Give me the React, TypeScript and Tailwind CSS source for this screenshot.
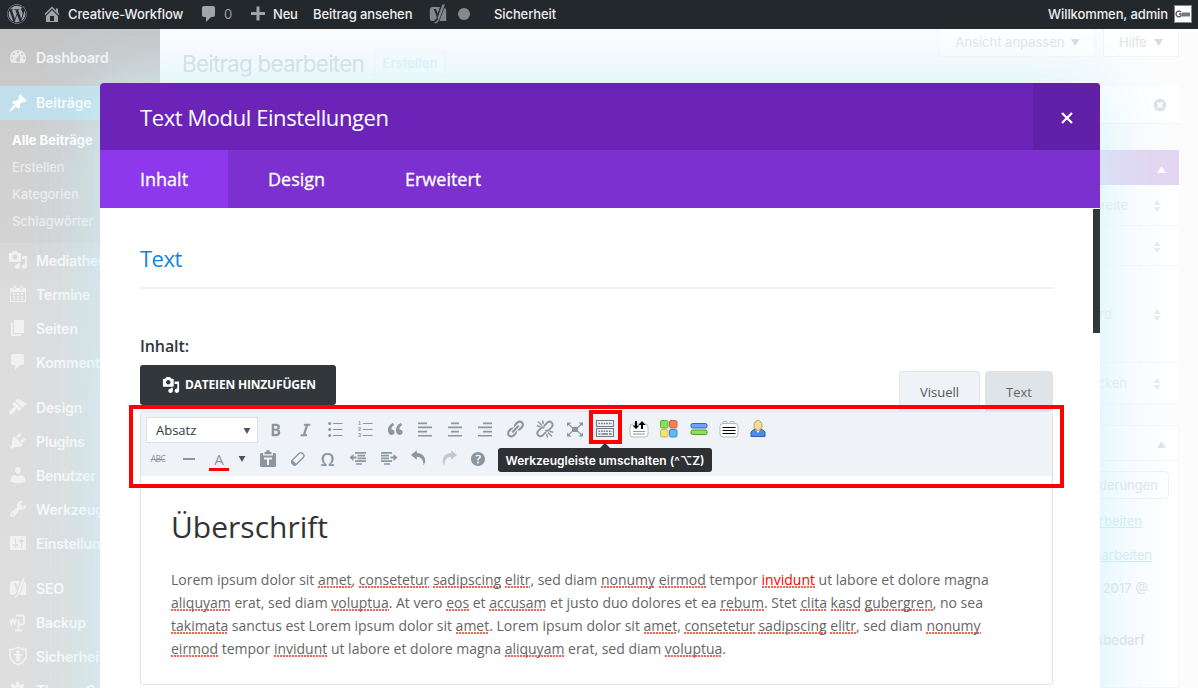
import React from "react";
import { FaWordpress } from "react-icons/fa";

const P = {
  dashboard:
    "M3.76 16h12.48c1.1-1.37 1.76-3.11 1.76-5 0-4.42-3.58-8-8-8s-8 3.58-8 8c0 1.89.66 3.63 1.76 5zM10 4c.55 0 1 .45 1 1s-.45 1-1 1-1-.45-1-1 .45-1 1-1zM6 6c.55 0 1 .45 1 1s-.45 1-1 1-1-.45-1-1 .45-1 1-1zm8 0c.55 0 1 .45 1 1s-.45 1-1 1-1-.45-1-1 .45-1 1-1zm-5.37 5.55L12 7v6c0 1.1-.9 2-2 2s-2-.9-2-2c0-.57.24-1.08.63-1.45zM4 10c.55 0 1 .45 1 1s-.45 1-1 1-1-.45-1-1 .45-1 1-1zm12 0c.55 0 1 .45 1 1s-.45 1-1 1-1-.45-1-1 .45-1 1-1z",
  pin: "M10.44 3.02l1.82-1.82 6.36 6.35-1.83 1.82c-1.05-.68-2.48-.57-3.41.36l-.75.75c-.92.93-1.04 2.35-.35 3.41l-1.83 1.82-2.41-2.41-2.8 2.79c-.42.42-3.38 2.71-3.8 2.29s1.86-3.39 2.28-3.81l2.79-2.79L4.1 9.36l1.83-1.82c1.05.69 2.48.57 3.4-.36l.75-.75c.93-.92 1.05-2.35.36-3.41z",
  media:
    "M13 11V4c0-.55-.45-1-1-1h-1.67L9 1H5L3.67 3H2c-.55 0-1 .45-1 1v7c0 .55.45 1 1 1h10c.55 0 1-.45 1-1zM7 4.5c1.38 0 2.5 1.12 2.5 2.5S8.38 9.5 7 9.5 4.5 8.38 4.5 7 5.62 4.5 7 4.5zM14 6h5v10.5c0 1.38-1.12 2.5-2.5 2.5S14 17.88 14 16.5s1.12-2.5 2.5-2.5c.17 0 .34.02.5.05V9h-3V6zm-4 8.05V13h2v3.5c0 1.38-1.12 2.5-2.5 2.5S7 17.88 7 16.5 8.12 14 9.5 14c.17 0 .34.02.5.05z",
  calendar:
    "M15 4h3v14H2V4h3V3c0-.83.67-1.5 1.5-1.5S8 2.17 8 3v1h4V3c0-.83.67-1.5 1.5-1.5S15 2.17 15 3v1zM6 3v2.5c0 .28.22.5.5.5s.5-.22.5-.5V3c0-.28-.22-.5-.5-.5S6 2.72 6 3zm7 0v2.5c0 .28.22.5.5.5s.5-.22.5-.5V3c0-.28-.22-.5-.5-.5s-.5.22-.5.5zm4 14V8H3v9h14zM7 9v2H5V9zM11 9v2H9V9zM15 9v2h-2V9zM7 12v1.500H5V12zM11 12v1.500H9V12zM15 12v1.500h-2V12zM7 14.500v1.500H5v-1.500zM11 14.500v1.500H9v-1.500zM15 14.500v1.500h-2v-1.500z",
  page: "M6 15V2h10v13H6zm-1 1h8v2H3V5h2v11z",
  comment:
    "M5 2h9c1.1 0 2 .9 2 2v7c0 1.1-.9 2-2 2h-2l-5 5v-5H5c-1.1 0-2-.9-2-2V4c0-1.1.9-2 2-2z",
  brush:
    "M14.48 11.06L7.41 3.99l1.5-1.5c.5-.56 2.3-.47 3.51.32 1.21.8 1.43 1.28 2.91 2.1 1.18.64 2.45 1.26 4.45.85zm-.71.71L6.7 4.7 4.93 6.47c-.39.39-.39 1.02 0 1.41l1.06 1.06c.39.39.39 1.03 0 1.42-.6.6-1.43 1.11-2.21 1.69-.35.26-.7.53-1.01.84C1.43 14.23.4 16.08 1.4 17.07c.99 1 2.84-.03 4.18-1.36.31-.31.58-.66.85-1.02.57-.78 1.08-1.61 1.69-2.21.39-.39 1.02-.39 1.41 0l1.06 1.06c.39.39 1.02.39 1.41 0z",
  plug: "M13.11 4.36L9.87 7.6 8 5.73l3.24-3.24c.35-.34 1.05-.2 1.56.32.52.51.66 1.21.31 1.55zm-8 1.77l.91-1.12 9.01 9.01-1.19.84c-.71.71-2.63 1.16-3.82 1.16H6.14L4.9 17.26c-.59.59-1.54.59-2.12 0-.59-.58-.59-1.53 0-2.12l1.24-1.24v-3.88c0-1.13.4-3.19 1.09-3.89zm7.26 3.97l3.24-3.24c.34-.35 1.04-.21 1.55.31.52.51.66 1.21.31 1.55l-3.24 3.25z",
  user: "M10 9.25c-2.27 0-2.73-3.44-2.73-3.44C7 4.02 7.82 2 9.97 2c2.16 0 2.98 2.02 2.71 3.81 0 0-.41 3.44-2.68 3.44zm0 2.57L12.72 10c2.39 0 4.52 2.33 4.52 4.53v2.49s-3.65 1.13-7.24 1.13c-3.65 0-7.24-1.13-7.24-1.13v-2.49c0-2.25 1.94-4.48 4.47-4.48z",
  wrench:
    "M16.68 9.77c-1.34 1.34-3.3 1.67-4.95.99l-5.41 6.52c-.99.99-2.59.99-3.58 0s-.99-2.59 0-3.57l6.52-5.42c-.68-1.65-.35-3.61.99-4.95 1.28-1.28 3.12-1.62 4.72-1.06l-2.89 2.89 2.82 2.82 2.86-2.87c.53 1.58.18 3.39-1.08 4.65zM3.81 16.21c.4.39 1.04.39 1.43 0 .4-.4.4-1.04 0-1.43-.39-.4-1.03-.4-1.43 0-.39.39-.39 1.03 0 1.43z",
  sliders:
    "M18 16V4c0-.55-.45-1-1-1H3c-.55 0-1 .45-1 1v12c0 .55.45 1 1 1h14c.55 0 1-.45 1-1zM8 11h1c.55 0 1 .45 1 1s-.45 1-1 1H8v1.5c0 .28-.22.5-.5.5s-.5-.22-.5-.5V13H6c-.55 0-1-.45-1-1s.45-1 1-1h1V5.5c0-.28.22-.5.5-.5s.5.22.5.5V11zm5-2h-1c-.55 0-1-.45-1-1s.45-1 1-1h1V5.5c0-.28.22-.5.5-.5s.5.22.5.5V7h1c.55 0 1 .45 1 1s-.45 1-1 1h-1v5.5c0 .28-.22.5-.5.5s-.5-.22-.5-.5V9z",
  home: "M16 8.5l1.53 1.53-1.06 1.06L10 4.6l-6.47 6.49-1.06-1.06L10 2.5l4 4v-2h2v4zm-6-2.46l6 5.99V18H4v-5.97zM12 17v-5H8v5h4z",
  plus: "M17 8v3h-5.500v5.500h-3V11H3V8h5.500V2.500h3V8z",
  gear: "M18 12h-2.180c-.170.700-.440 1.350-.810 1.930l1.540 1.540-2.100 2.100-1.540-1.540c-.580.360-1.230.630-1.910.790V19H8v-2.180c-.680-.160-1.330-.430-1.910-.790l-1.540 1.540-2.120-2.120 1.540-1.540c-.360-.580-.630-1.230-.790-1.910H1V9h2.170c.160-.700.440-1.350.800-1.940L2.430 5.520l2.100-2.100 1.540 1.540c.580-.370 1.240-.640 1.930-.810V2h3v2.180c.680.160 1.330.430 1.910.790l1.540-1.540 2.120 2.120-1.540 1.540c.360.590.640 1.240.800 1.940H18zM9.500 13.500c1.660 0 3-1.340 3-3s-1.340-3-3-3-3 1.340-3 3 1.340 3 3 3z",
  bold: "M6 4v13h4.54c1.37 0 2.46-.33 3.26-1 .8-.66 1.2-1.58 1.2-2.77 0-.84-.17-1.51-.51-2.01s-.9-.85-1.67-1.03v-.09c.57-.1 1.02-.4 1.36-.9s.51-1.13.51-1.91c0-1.14-.39-1.98-1.17-2.5C12.75 4.26 11.5 4 9.78 4H6zm2.57 5.15V6.26h1.36c.73 0 1.27.11 1.61.32.34.22.51.58.51 1.07 0 .54-.16.92-.47 1.15s-.82.35-1.51.35h-1.5zm0 2.19h1.6c1.44 0 2.16.53 2.16 1.61 0 .6-.17 1.05-.51 1.34s-.86.43-1.57.43H8.57v-3.38z",
  italic: "M14.78 6h-2.13l-2.8 9h2.12l-.62 2H4.6l.62-2h2.14l2.8-9H8.03l.62-2h6.75z",
  quote:
    "M9.49 13.22c0-.74-.2-1.38-.61-1.9-.62-.78-1.83-.88-2.53-.72-.29-1.65 1.11-3.75 2.92-4.65L7.88 4c-2.73 1.3-5.42 4.28-4.96 8.05C3.21 14.43 4.59 16 6.54 16c.85 0 1.56-.25 2.12-.75s.83-1.18.83-2.03zm8.05 0c0-.74-.2-1.38-.61-1.9-.63-.78-1.83-.88-2.53-.72-.29-1.65 1.11-3.75 2.92-4.65L15.93 4c-2.73 1.3-5.41 4.28-4.95 8.05.29 2.38 1.66 3.95 3.61 3.95.85 0 1.56-.25 2.12-.75s.83-1.18.83-2.03z",
  link: "M17.74 2.76c1.68 1.69 1.68 4.41 0 6.1l-1.53 1.52c-1.12 1.12-2.7 1.47-4.14 1.09l2.62-2.61.76-.77.76-.76c.84-.84.84-2.2 0-3.04-.84-.85-2.2-.85-3.04 0l-.77.76-3.38 3.38c-.37-1.44-.02-3.02 1.1-4.14l1.52-1.53c1.69-1.68 4.42-1.68 6.1 0zM8.59 13.43l5.34-5.34c.42-.42.42-1.1 0-1.52-.44-.43-1.13-.39-1.53 0l-5.33 5.34c-.42.42-.42 1.1 0 1.52.44.43 1.13.39 1.52 0zm-.76 2.29l4.14-4.15c.38 1.44.03 3.02-1.09 4.14l-1.52 1.53c-1.69 1.68-4.41 1.68-6.1 0-1.68-1.68-1.68-4.42 0-6.1l1.53-1.52c1.12-1.12 2.7-1.47 4.14-1.1l-4.14 4.15c-.85.84-.85 2.2 0 3.05.84.84 2.2.84 3.04 0z",
  left: "M12 5.200V3.500H3v1.700h9zm5 4V7.500H3v1.700h14zm-5 4.200v-1.700H3v1.700h9zm5 4.200v-1.700H3v1.700h14z",
  center: "M14 5.200V3.500H6v1.700h8zm3 4V7.500H3v1.700h14zm-3 4.200v-1.700H6v1.700h8zm3 4.200v-1.700H3v1.700h14z",
  right: "M17 5.200V3.500H8v1.700h9zm0 4V7.500H3v1.700h14zm0 4.200v-1.700H8v1.700h9zm0 4.200v-1.700H3v1.700h14z",
  help: "M17 10c0-3.87-3.14-7-7-7-3.87 0-7 3.13-7 7s3.13 7 7 7c3.86 0 7-3.13 7-7zm-6.3 1.48H9.14v-.43c0-.38.08-.7.24-.98s.46-.57.88-.89c.41-.29.68-.53.81-.71.14-.18.2-.39.2-.62 0-.25-.09-.44-.28-.58-.19-.13-.45-.19-.79-.19-.58 0-1.25.19-2 .57l-.64-1.28c.87-.49 1.8-.74 2.77-.74.81 0 1.45.2 1.92.58.48.39.71.91.71 1.55 0 .43-.09.8-.29 1.11-.19.32-.57.67-1.11 1.06-.38.28-.61.49-.71.63-.1.15-.15.34-.15.57v.35zm-1.47 2.74c-.18-.17-.27-.42-.27-.73 0-.33.08-.58.26-.75s.43-.25.77-.25c.32 0 .57.09.75.26s.27.42.27.74c0 .3-.09.55-.27.72-.18.18-.43.27-.75.27-.33 0-.58-.09-.76-.26z",
  yoast:
    "M4.500 3H12l-2.300 6.400L7.900 5H5.700l2.900 7.300c.3.700.3 1.200 0 1.900-.3.800-.8 1.300-2 1.500V17H4.500C3 17 1.800 15.900 1.800 14.400V5.600C1.800 4.100 3 3 4.500 3zM14.400.500h2.500L11 16c-.9 2.300-1.900 3.500-4.300 3.500v-1.600c1.700-.1 2.500-1 3-2.400.3-.8.300-1.600 0-2.400l.1-.2zM16.300 4c1.100.3 1.900 1.200 1.900 2.400V17H11.400z",
};

function Icon({ d, className = "size-5" }: { d: string; className?: string }) {
  return (
    <svg viewBox="0 0 20 20" className={className} fill="currentColor" fillRule="evenodd">
      <path d={d} />
    </svg>
  );
}

function Svg({ children, className = "size-5" }: { children: React.ReactNode; className?: string }) {
  return (
    <svg viewBox="0 0 20 20" className={className} fill="none" stroke="currentColor">
      {children}
    </svg>
  );
}

function AdminBar() {
  return (
    <header className="flex h-[29px] items-center bg-[#23282d] text-[13px] font-medium text-[#eee]">
      <FaWordpress className="mb-px ml-[7px] size-5 text-[#9ca1a6]" />
      <Icon d={P.home} className="mb-px ml-[15px] size-5 text-[#a0a5aa]" />
      <span className="ml-[6px] w-[116px] whitespace-nowrap tracking-[-0.1px]">Creative-Workflow</span>
      <Icon d={P.comment} className="mb-px ml-[15px] size-5 text-[#a0a5aa]" />
      <span className="ml-[5px] w-[9px] font-normal text-[#9ca1a6]">0</span>
      <Icon d={P.plus} className="mb-px ml-[15px] size-5 text-[#a0a5aa]" />
      <span className="ml-[5px] w-[25px] tracking-[-0.2px]">Neu</span>
      <span className="ml-[15px] w-[100px] whitespace-nowrap tracking-[-0.1px]">Beitrag ansehen</span>
      <Icon d={P.yoast} className="mb-px ml-[15px] size-5 text-[#82878c]" />
      <span className="mb-px ml-[10px] size-3 rounded-full bg-[#888]" />
      <span className="ml-[24px] tracking-[-0.1px]">Sicherheit</span>
      <span className="mr-[6px] ml-auto tracking-[-0.1px]">Willkommen, admin</span>
      <span className="mr-[6px] mb-px flex h-[18px] w-[18px] items-center justify-center border border-[#82878c] bg-white">
        <svg viewBox="0 0 16 16" className="size-4" fill="none" stroke="#555">
          <path d="M6 6C4 4 1 5.500 1 8s3 4 5 2V8H4" strokeWidth="1.300" />
          <path d="M7 8.500h8" strokeWidth="4" stroke="#777" />
        </svg>
      </span>
    </header>
  );
}

function BackupIcon() {
  return (
    <Svg>
      <path d="M2 6.500l1.500 5 1.600-4 1.600 4 1.500-5" strokeWidth="1.800" />
      <path d="M8 3.500h6.500a1.500 1.500 0 0 1 1.500 1.500v6a1.500 1.500 0 0 1-1.500 1.500h-4V7M10.500 12v6M7 18.500h7" strokeWidth="1.800" />
    </Svg>
  );
}

function ShieldIcon() {
  return (
    <Svg>
      <path d="M2 3.200l2.500.3L10 1.500l5.500 2 2.500-.3v6.800c0 4-4 7-8 8.800-4-1.800-8-4.800-8-8.800z" strokeWidth="1.700" />
      <circle cx="10" cy="6" r="1.800" fill="currentColor" stroke="none" />
      <path d="M5.500 8.800h9M10 8.500v6.500M8.700 9v6M11.300 9v6" strokeWidth="1.700" />
    </Svg>
  );
}

function SideItem({ icon, label }: { icon: React.ReactNode; label: string }) {
  return (
    <div className="flex h-[34px] shrink-0 items-center gap-2 pl-2 text-white/60">
      {icon}
      <span className="text-[14px] font-semibold tracking-[-0.15px] whitespace-nowrap text-white/80">{label}</span>
    </div>
  );
}

function Sidebar() {
  return (
    <nav className="flex w-40 shrink-0 flex-col overflow-hidden bg-linear-to-b from-[#c5c5c6] via-[#dcdcdd] via-40% to-[#dededf] pt-3">
      <div className="-mt-px flex shrink-0 flex-col">
        <SideItem icon={<Icon d={P.dashboard} />} label="Dashboard" />
      </div>
      <div className="mt-[12px] flex h-[34px] shrink-0 items-center gap-2 bg-[#c0deeb] pb-px pl-2 text-white">
        <Icon d={P.pin} />
        <span className="text-[14px] font-semibold tracking-[-0.15px] text-white/90">Beiträge</span>
      </div>
      <div className="flex h-[123px] shrink-0 flex-col bg-[#cfcfd0]/50 pt-[7px] pl-3 text-[13px] font-medium tracking-[-0.15px] text-white/60">
        <span className="h-[27px] leading-[27px] font-bold tracking-normal text-white">Alle Beiträge</span>
        <span className="h-[27px] leading-[27px]">Erstellen</span>
        <span className="h-[27px] leading-[27px]">Kategorien</span>
        <span className="h-[27px] leading-[27px]">Schlagwörter</span>
      </div>
      <SideItem icon={<Icon d={P.media} />} label="Mediathek" />
      <SideItem icon={<Icon d={P.calendar} />} label="Termine" />
      <SideItem icon={<Icon d={P.page} />} label="Seiten" />
      <SideItem icon={<Icon d={P.comment} />} label="Kommentare" />
      <div className="h-[11px] shrink-0" />
      <SideItem icon={<Icon d={P.brush} />} label="Design" />
      <SideItem icon={<Icon d={P.plug} />} label="Plugins" />
      <SideItem icon={<Icon d={P.user} />} label="Benutzer" />
      <SideItem icon={<Icon d={P.wrench} />} label="Werkzeuge" />
      <SideItem icon={<Icon d={P.sliders} />} label="Einstellungen" />
      <div className="h-[11px] shrink-0" />
      <SideItem icon={<Icon d={P.yoast} />} label="SEO" />
      <SideItem icon={<BackupIcon />} label="Backup" />
      <SideItem icon={<ShieldIcon />} label="Sicherheit" />
      <SideItem icon={<Icon d={P.gear} />} label="Theme Options" />
    </nav>
  );
}

function Sorter() {
  return (
    <svg viewBox="0 0 8 14" className="mr-[18px] h-[14px] w-2" fill="#eaedee">
      <path d="M4 1l3.500 5h-7zM4 13l3.500-5h-7z" />
    </svg>
  );
}

function OptionRow({ label, className }: { label: string; className: string }) {
  return (
    <div className={`flex shrink-0 items-center border-b border-[#f8f9fa] pt-[2px] ${className}`}>
      <span className="ml-auto text-right text-[13px] whitespace-nowrap">{label}</span>
      <Sorter />
    </div>
  );
}

function Main() {
  return (
    <main className="flex min-w-0 flex-1 flex-col bg-[#fcfcfd] pr-[19px] pl-[22px] text-[#e1e4e6]">
      <div className="flex h-[57px] shrink-0 justify-between">
        <div className="flex items-center gap-[10px] pt-[12px]">
          <h1 className="w-[182px] text-[22.5px] tracking-[-0.8px] whitespace-nowrap text-[#d5dadd]">Beitrag bearbeiten</h1>
          <span className="flex h-[25px] w-[72px] items-center justify-center border border-[#f4f8fa] text-[13px] font-semibold text-[#e1f1f7]">
            Erstellen
          </span>
        </div>
        <div className="flex gap-2 text-[13px]">
          <div className="flex h-[28px] w-[156px] items-center justify-center gap-[6px] border border-t-0 border-[#f7f8f8] bg-white pl-px">
            <span>Ansicht anpassen</span>
            <span className="text-[9px] text-[#d8dbdd]">▼</span>
          </div>
          <div className="flex h-[28px] w-[76px] items-center justify-center gap-[7px] border border-t-0 border-[#f4f5f6] bg-white">
            <span>Hilfe</span>
            <span className="text-[9px] text-[#d8dbdd]">▼</span>
          </div>
        </div>
      </div>
      <div className="flex h-[38px] w-[280px] shrink-0 items-center justify-end self-end border-b border-[#f3f4f5] bg-white pr-3">
        <svg viewBox="0 0 14 14" className="size-[14px]">
          <circle cx="7" cy="7" r="6.300" fill="#dfe1e3" />
          <path d="M4.500 4.500l5 5M9.500 4.500l-5 5" stroke="#fff" strokeWidth="1.800" />
        </svg>
      </div>
      <section className="mt-[26px] flex h-[254px] w-[280px] shrink-0 flex-col self-end border-b border-[#f6f7f8] bg-white/80 text-[#e9ecee]">
        <div className="flex h-[35px] shrink-0 items-center justify-end bg-[#e3d5f2] pt-[3px] pr-[13px]">
          <svg viewBox="0 0 10 8" className="h-[7px] w-[9px]" fill="#fff">
            <path d="M5 0l5 8H0z" />
          </svg>
        </div>
        <OptionRow label="Volle Breite" className="h-[41px] gap-[25px]" />
        <OptionRow label="" className="h-[40px]" />
        <OptionRow label="Standard" className="h-[97px] gap-[41px]" />
        <OptionRow label="Verstecken" className="h-[41px] gap-[26px]" />
      </section>
      <section className="mt-[21px] flex w-[280px] flex-1 flex-col self-end border border-[#f6f7f8] bg-white/80 text-right text-[13px]">
        <div className="flex h-[35px] shrink-0 items-center justify-end border-b border-[#f5f6f7] pt-[3px] pr-[12px]">
          <svg viewBox="0 0 10 8" className="h-[7px] w-[9px]" fill="#e2e5e7">
            <path d="M5 0l5 8H0z" />
          </svg>
        </div>
        <div className="mt-[10px] mr-[9px] flex h-[28px] w-[170px] shrink-0 items-center justify-end self-end rounded-sm border border-[#f1f3f4] pt-px pr-[10px]">
          Änderungen
        </div>
        <span className="mt-[14px] mr-[36px] h-[17px] leading-[17px] text-[#d3eaf2] underline">Bearbeiten</span>
        <span className="mt-[17px] mr-[26px] h-[17px] leading-[17px] text-[#d3eaf2] underline">Bearbeiten</span>
        <span className="mt-[16px] mr-[30px] h-[17px] leading-[17px] font-medium">Juni 2017 @</span>
        <span className="mt-[35px] mr-[33px] h-[17px] leading-[17px] font-semibold">Arbeitsbedarf</span>
      </section>
    </main>
  );
}

function Cell({ children, className = "w-[30px]" }: { children: React.ReactNode; className?: string }) {
  return <span className={`flex h-7 shrink-0 items-center justify-center ${className}`}>{children}</span>;
}

function ListIcon({ ordered = false }: { ordered?: boolean }) {
  return (
    <Svg>
      <path d="M8 4.500h9.500M8 10.500h9.500M8 16.500h9.500" strokeWidth="1.200" />
      {ordered ? (
        <g fill="currentColor" stroke="none" fontSize="5.500" fontFamily="Liberation Sans" fontWeight="700">
          <text x="3" y="6.300">1</text>
          <text x="3" y="12.300">2</text>
          <text x="3" y="18.300">3</text>
        </g>
      ) : (
        <g fill="currentColor" stroke="none">
          <circle cx="4.700" cy="4.500" r="1.500" />
          <circle cx="4.700" cy="10.500" r="1.500" />
          <circle cx="4.700" cy="16.500" r="1.500" />
        </g>
      )}
    </Svg>
  );
}

function UnlinkIcon() {
  return (
    <Svg>
      <g strokeWidth="1.900">
        <path d="M9 7l3.300-3.300a3.100 3.100 0 0 1 4.400 4.400L14 10.800c-1 1-2.500 1-3.500.3" />
        <path d="M11 13l-3.300 3.300a3.100 3.100 0 0 1-4.400-4.400L6 9.200c1-1 2.500-1 3.500-.3" />
      </g>
      <path d="M7 6.500L3 2.500M8.300 5L7.500 1.500M5.500 7.700L1.800 6.700M13 13.500l4 4M11.700 15l.8 3.500M14.500 12.300l3.700 1" strokeWidth="1.500" />
    </Svg>
  );
}

function FullscreenIcon() {
  return (
    <Svg>
      <g fill="currentColor" stroke="none">
        <path d="M7 8h6v5H7zM2 3.500h4.500L2 7.500zM18 3.500h-4.500L18 7.500zM2 17.500h4.500L2 13.500zM18 17.500h-4.500L18 13.500z" />
      </g>
      <path d="M3 4.500l4 4M17 4.500l-4 4M3 16.500l4-4M17 16.500l-4-4" strokeWidth="1.100" />
    </Svg>
  );
}

function KitchenSinkIcon() {
  return (
    <Svg className="mb-[2px] size-5 text-[#6f7a84]">
      <path d="M1.500 2.500h17v6h-17zM1.500 10.500h17v8h-17z" strokeWidth="1.100" />
      <path d="M3.500 5.500h13.400" strokeWidth="1.600" strokeDasharray="1.600 1" />
      <path d="M3.500 13.200h13.400" strokeWidth="1.500" strokeDasharray="1.600 1" />
      <path d="M3.500 16h2M6.500 16h6.500M14 16h2.700" strokeWidth="1.500" />
    </Svg>
  );
}

function OutdentIcon({ indent = false }: { indent?: boolean }) {
  return (
    <Svg>
      {indent ? (
        <>
          <path d="M2 3.800h11M2 6.600h8M2 9.400h8M2 12.200h11M5 15h6" strokeWidth="1.700" />
          <path d="M11.500 8.500h4" strokeWidth="2" />
          <path d="M14.500 5l4 3.500-4 3.500z" fill="currentColor" stroke="none" />
        </>
      ) : (
        <>
          <path d="M7 3.800h11M9.500 6.600h7.500M9.500 9.400h8.500M7 12.200h11M8 15h6" strokeWidth="1.700" />
          <path d="M4.500 8.500h4" strokeWidth="2" />
          <path d="M5.500 5l-4 3.500 4 3.500z" fill="currentColor" stroke="none" />
        </>
      )}
    </Svg>
  );
}

function Undo({ className = "size-5" }: { className?: string }) {
  return (
    <Svg className={className}>
      <path d="M7.800 1.200L2 6l5.800 4.800V7.800c4 .2 6.600 2.500 6.900 8.700 3.600-5.600.6-12.200-6.900-12.400z" fill="currentColor" stroke="none" />
    </Svg>
  );
}

function PluginIcons() {
  return (
    <>
      <Cell className="ml-1 w-[30px]">
        <svg viewBox="0 0 20 18" className="h-[18px] w-5">
          <rect x="1" y="4" width="18" height="13" rx="3" fill="#fff" stroke="#bbb" />
          <path d="M4 11.500h12M4 14h12" stroke="#999" />
          <path d="M7 1v6M13 9V3" stroke="#000" strokeWidth="2" />
          <path d="M3.500 5.500h7L7 9zM9.500 5h7L13 1z" fill="#000" />
        </svg>
      </Cell>
      <Cell>
        <svg viewBox="0 0 18 18" className="size-[18px]" strokeWidth="1">
          <rect x=".5" y=".5" width="7.500" height="7.500" rx="1.500" fill="#85e34e" stroke="#55b43b" />
          <rect x="9.500" y=".5" width="7.500" height="7.500" rx="1.500" fill="#f57f5b" stroke="#d4603f" />
          <rect x=".5" y="9.500" width="7.500" height="7.500" rx="1.500" fill="#f1e37c" stroke="#cdb84d" />
          <rect x="9.500" y="9.500" width="7.500" height="7.500" rx="1.500" fill="#63b7ee" stroke="#3a8bc8" />
        </svg>
      </Cell>
      <Cell className="w-[29px]">
        <svg viewBox="0 0 18 14" className="h-[14px] w-[18px]">
          <rect x="1" y="1.500" width="16" height="4.500" rx="1.500" fill="#6da4f3" stroke="#2e64c4" />
          <rect x="1" y="8" width="16" height="4.500" rx="1.500" fill="#91e252" stroke="#479f25" />
        </svg>
      </Cell>
      <Cell className="w-[31px]">
        <svg viewBox="0 0 20 18" className="h-[18px] w-5">
          <path d="M4 4V1.500h4V4M11 4V1.500h4V4" fill="#fff" stroke="#bbb" />
          <rect x="1" y="3.500" width="18" height="13.500" rx="3" fill="#fff" stroke="#bbb" />
          <path d="M3.500 7.500h13M3.500 10.500h13M3.500 13.500h13" stroke="#000" strokeWidth="1.100" />
        </svg>
      </Cell>
      <Cell className="w-[28px]">
        <svg viewBox="0 0 16 18" className="h-[18px] w-4">
          <path d="M1 16.500V12l3-2.500h8L15 12v4.500z" fill="#4c8ce6" stroke="#2b60b4" />
          <path d="M6 10l2 3 2-3z" fill="#fff" />
          <ellipse cx="8" cy="5.500" rx="4" ry="5" fill="#f2dba0" stroke="#c9a14a" />
        </svg>
      </Cell>
    </>
  );
}

function Toolbar() {
  return (
    <div className="flex h-[64px] flex-col rounded-t bg-[#eff3f8] pt-[3px] pl-[5px] text-[#8d969f]">
      <div className="flex h-[30px] items-start">
        <div className="mt-[2px] flex h-[26px] w-[112px] items-center justify-between border border-[#dde2e7] bg-white pt-px pr-[6px] pl-[9px] font-['Open_Sans'] text-[13px] text-[#32373c]">
          <span>Absatz</span>
          <svg viewBox="0 0 8 7" className="h-[6px] w-2" fill="#4c5660">
            <path d="M0 0h8L4 7z" />
          </svg>
        </div>
        <span className="w-[2px]" />
        <Cell><Icon d={P.bold} className="size-[19px]" /></Cell>
        <Cell><Icon d={P.italic} className="size-[19px]" /></Cell>
        <Cell><ListIcon /></Cell>
        <Cell><ListIcon ordered /></Cell>
        <Cell><Icon d={P.quote} /></Cell>
        <Cell><Icon d={P.left} /></Cell>
        <Cell><Icon d={P.center} /></Cell>
        <Cell><Icon d={P.right} /></Cell>
        <Cell><Icon d={P.link} /></Cell>
        <Cell><UnlinkIcon /></Cell>
        <Cell><FullscreenIcon /></Cell>
        <Cell><KitchenSinkIcon /></Cell>
        <PluginIcons />
      </div>
      <div className="-ml-[3px] flex h-[28px] items-center">
        <Cell><span className="text-[8.5px] tracking-[-0.6px] line-through">ABC</span></Cell>
        <Cell className="w-[31px]"><span className="h-[2px] w-3 bg-current" /></Cell>
        <Cell>
          <span className="mt-[3px] flex h-[20px] w-5 items-center justify-center border-b-[3px] border-[#f00] text-[15px] font-medium">A</span>
        </Cell>
        <Cell className="w-4">
          <svg viewBox="0 0 8 7" className="h-[6px] w-2" fill="#4c5660">
            <path d="M0 0h8L4 7z" />
          </svg>
        </Cell>
        <Cell className="ml-[3px] w-[30px]">
          <Svg className="size-5">
            <path d="M2 5.500A1.500 1.500 0 0 1 3.500 4H5v2.500h10V4h1.500A1.500 1.500 0 0 1 18 5.500v11a1.500 1.500 0 0 1-1.500 1.500h-13A1.500 1.500 0 0 1 2 16.500zM6.500 5.300V3H8a2 2 0 0 1 4 0h1.500v2.300zM6 8.500v2h3V16h2v-5.500h3v-2z" fill="currentColor" stroke="none" fillRule="evenodd" />
          </Svg>
        </Cell>
        <Cell className="w-[29px]">
          <Svg>
            <path d="M4.200 11.300l7-7a2.200 2.200 0 0 1 3.200 0l.9 1a2.200 2.200 0 0 1 0 3.100l-7.200 7.100c-.8.800-2 .6-3-.4l-.6-.6c-1-1-1.200-2.300-.3-3.200z" strokeWidth="1.400" />
            <path d="M4.200 10.800l4.600 4.600-1.600 1.300c-1.400.6-4.500-2-4-4z" fill="currentColor" stroke="none" />
          </Svg>
        </Cell>
        <Cell className="w-[31px]"><span className="text-[18px] leading-5 font-semibold">Ω</span></Cell>
        <Cell><OutdentIcon /></Cell>
        <Cell className="w-[31px]"><OutdentIcon indent /></Cell>
        <Cell><Undo /></Cell>
        <Cell className="w-[29px]"><Undo className="size-5 -scale-x-100 opacity-45" /></Cell>
        <Cell className="w-[30px]"><Icon d={P.help} /></Cell>
      </div>
    </div>
  );
}

function Sp({ children }: { children: string }) {
  return (
    <span className="bg-[linear-gradient(90deg,#fa5f50_2px,transparent_2px)] bg-[length:3px_2px] bg-[position:0_16px] bg-repeat-x">
      {children}
    </span>
  );
}

function EditorContent() {
  return (
    <div className="px-[30px] pt-[27px] font-['Open_Sans'] text-[#666]">
      <h1 className="h-[50px] text-[30px] leading-[48px] text-[#333]">Überschrift</h1>
      <div className="mt-[15px] text-[14px] leading-[23px] whitespace-nowrap">
        <p>
          Lorem ipsum dolor sit <Sp>amet</Sp>, <Sp>consetetur</Sp> <Sp>sadipscing</Sp> <Sp>elitr</Sp>, sed diam <Sp>nonumy</Sp>{" "}
          <Sp>eirmod</Sp> tempor <span className="text-[#f00]"><Sp>invidunt</Sp></span> ut labore et dolore magna
        </p>
        <p>
          <Sp>aliquyam</Sp> erat, sed diam <Sp>voluptua</Sp>. At vero <Sp>eos</Sp> et <Sp>accusam</Sp> et justo duo dolores et ea{" "}
          <Sp>rebum</Sp>. Stet <Sp>clita</Sp> <Sp>kasd</Sp> <Sp>gubergren</Sp>, no sea
        </p>
        <p>
          <Sp>takimata</Sp> sanctus est Lorem ipsum dolor sit <Sp>amet</Sp>. Lorem ipsum dolor sit <Sp>amet</Sp>,{" "}
          <Sp>consetetur</Sp> <Sp>sadipscing</Sp> <Sp>elitr</Sp>, sed diam <Sp>nonumy</Sp>
        </p>
        <p>
          <Sp>eirmod</Sp> tempor <Sp>invidunt</Sp> ut labore et dolore magna <Sp>aliquyam</Sp> erat, sed diam <Sp>voluptua</Sp>.
        </p>
      </div>
    </div>
  );
}

function Modal() {
  return (
    <div className="absolute top-[83px] left-[100px] flex h-[720px] w-[1000px] flex-col rounded-t bg-white font-['Open_Sans'] shadow-[0_0_70px_rgba(205,241,251,0.95)]">
      <div className="flex h-[67px] shrink-0 items-center justify-between rounded-t bg-[#6c24b8] pl-10 text-white">
        <h2 className="pt-[2px] text-[22px] tracking-[-0.42px]">Text Modul Einstellungen</h2>
        <div className="flex h-full w-[67px] items-center justify-center rounded-tr bg-[#6021a8]">
          <svg viewBox="0 0 12 12" className="mt-[2px] size-3" stroke="#fff" strokeWidth="2.200">
            <path d="M1 1l10 10M11 1L1 11" />
          </svg>
        </div>
      </div>
      <div className="flex h-[58px] shrink-0 items-center bg-[#7c30d0] text-[18px] text-white [-webkit-text-stroke:0.3px_white]">
        <span className="flex h-full w-[128px] items-center bg-[#8e38ee] pl-10">Inhalt</span>
        <span className="w-[137px] pl-10">Design</span>
        <span className="pl-10">Erweitert</span>
      </div>
      <div className="flex flex-col pr-[47px] pl-10">
        <h3 className="mt-[29px] h-[52px] border-b-2 border-[#eef2f6] text-[22px] leading-[43px] tracking-[-0.5px] text-[#1483dc]">Text</h3>
        <label className="mt-[45px] h-[24px] text-[16px] leading-[24px] font-semibold tracking-[-0.1px] text-[#32373c]">Inhalt:</label>
        <div className="mt-[7px] flex h-[46px] items-end justify-between">
          <div className="flex h-10 w-[196px] items-center gap-[5px] self-start rounded-[3px] bg-[#32373c] pl-[22px] text-white">
            <Icon d={P.media} className="size-[18px]" />
            <span className="text-[12px] font-bold tracking-[-0.18px] whitespace-nowrap">DATEIEN HINZUFÜGEN</span>
          </div>
          <div className="flex h-10 gap-[5px] text-[13px] font-medium text-[#555]">
            <div className="-mb-px flex h-[41px] w-[81px] items-center justify-center rounded-t border border-b-0 border-[#dfe5ea] bg-[#eff3f8] pt-[2px]">Visuell</div>
            <div className="flex w-[68px] items-center justify-center rounded-t bg-[#dfe4e9] pt-[3px] text-[#666]">Text</div>
          </div>
        </div>
        <div className="h-[274px] rounded-[3px] border border-[#dfe3e8]">
          <Toolbar />
          <EditorContent />
        </div>
      </div>
      <div className="absolute top-[126px] right-0 h-[124px] w-[7px] bg-[#32373c]" />
      <div className="absolute top-[322px] left-[29px] h-[83px] w-[935px] border-4 border-[#f00]" />
      <div className="absolute top-[327px] left-[489px] h-[34px] w-[33px] border-4 border-[#f00]" />
      <div className="absolute top-[365px] left-[398px] flex h-6 w-[214px] items-center justify-center rounded-[3px] bg-[#2e3033] pt-px font-['Inter'] text-[12px] font-semibold whitespace-nowrap text-white">
        <svg viewBox="0 0 10 5" className="absolute -top-[5px] left-[102px] h-[5px] w-[10px]" fill="#2e3033">
          <path d="M0 5l5-5 5 5z" />
        </svg>
        Werkzeugleiste umschalten (^⌥Z)
      </div>
    </div>
  );
}

export default function App() {
  return (
    <div className="relative flex h-[688px] w-[1198px] flex-col overflow-hidden bg-white font-['Inter','Noto_Sans',sans-serif]">
      <div className="relative z-10">
        <AdminBar />
      </div>
      <div className="flex min-h-0 flex-1 overflow-hidden">
        <Sidebar />
        <Main />
      </div>
      <Modal />
    </div>
  );
}
